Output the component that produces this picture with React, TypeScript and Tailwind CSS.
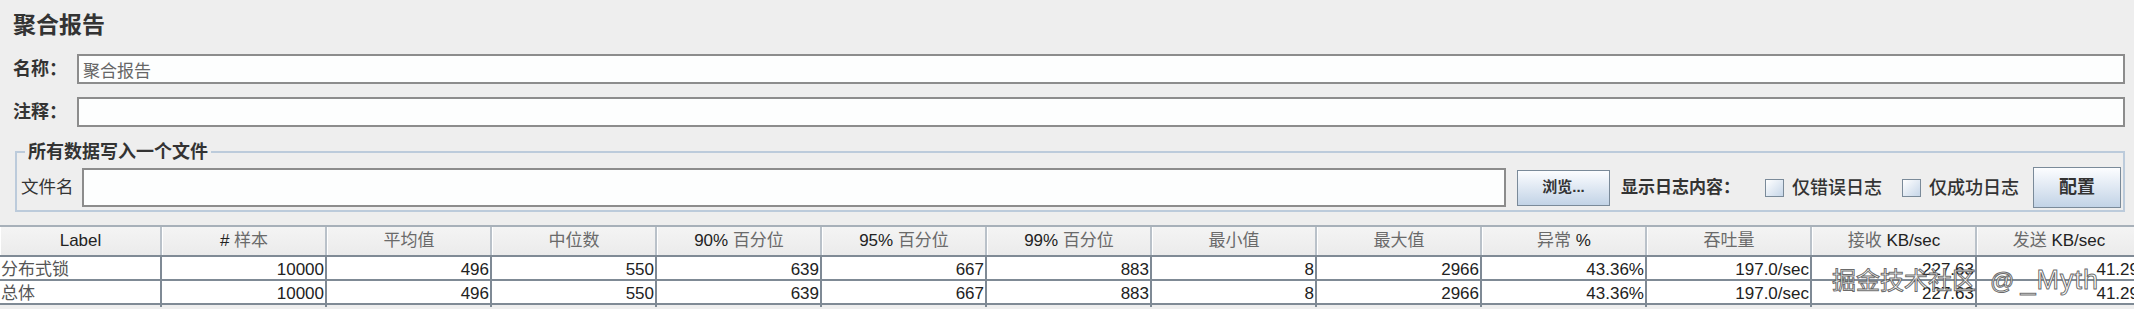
import React from "react";

const cjk = /([\u3000-\u9fff\uff00-\uffef]+)/;

const headers = [
    "Label",
    "# 样本",
    "平均值",
    "中位数",
    "90% 百分位",
    "95% 百分位",
    "99% 百分位",
    "最小值",
    "最大值",
    "异常 %",
    "吞吐量",
    "接收 KB/sec",
    "发送 KB/sec",
];

const values = ["10000", "496", "550", "639", "667", "883", "8", "2966", "43.36%", "197.0/sec", "227.63", "41.29"];

const rows = [
    ["分布式锁", ...values],
    ["总体", ...values],
];

// CJK runs render lighter in the header, latin parts stay dark
const Mixed = ({ text }: { text: string }) => (
    <span className="whitespace-pre">
        {text.split(cjk).map((part, i) =>
            cjk.test(part) ? (
                <span key={i} className="text-[#6a6a6a]">{part}</span>
            ) : (
                <span key={i}>{part}</span>
            )
        )}
    </span>
);

const Check = ({ label }: { label: string }) => (
    <div className="flex items-center gap-[8px]">
        <span className="w-[19px] h-[18px] border border-[#7a8a99] bg-linear-to-br from-[#ffffff] to-[#c6d6e8]" />
        <span className="text-[18px] leading-[20px] font-medium text-[#333]">{label}</span>
    </div>
);

const App = () => {
    return (
        <div className="relative w-[2134px] h-[309px] overflow-hidden bg-[#eeeeee] font-['Liberation_Sans','Noto_Sans_CJK_SC',sans-serif] text-[#222]">
            <div className="pl-[13px] pt-[13px] text-[23px] leading-[24px] font-bold text-[#333]">聚合报告</div>

            <div className="flex items-center mt-[17px] h-[30px] pr-[9px]">
                <label className="w-[77px] pl-[13px] text-[18px] font-bold text-[#333]">名称：</label>
                <input
                    type="text"
                    defaultValue="聚合报告"
                    className="flex-1 h-[30px] border-2 border-[#8c8c8c] bg-[#fdfefe] pl-[4px] text-[17px] text-[#666] outline-none"
                />
            </div>

            <div className="flex items-center mt-[13px] h-[30px] pr-[9px]">
                <label className="w-[77px] pl-[13px] text-[18px] font-bold text-[#333]">注释：</label>
                <input type="text" className="flex-1 h-[30px] border-2 border-[#8c8c8c] bg-[#fdfefe] outline-none" />
            </div>

            <fieldset className="mt-[16px] ml-[15px] w-[2110px] border-2 border-[#bccbdb] pl-[4px] pr-[2px] pt-[6px] pb-[2px]">
                <legend className="ml-[4px] px-[3px] text-[18px] leading-[18px] font-bold text-[#333]">所有数据写入一个文件</legend>
                <div className="flex items-center h-[41px]">
                    <span className="w-[61px] text-[17.5px] text-[#333]">文件名</span>
                    <input type="text" className="flex-1 h-[39px] border-2 border-[#8c8c8c] bg-[#fdfefe] outline-none" />
                    <button className="ml-[11px] w-[93px] h-[36px] border border-[#7a8a99] bg-linear-to-b from-[#fcfdff] to-[#c2d3e6] text-[15px] font-bold text-[#333]">
                        浏览...
                    </button>
                    <span className="ml-[11px] text-[17px] font-bold text-[#333]">显示日志内容：</span>
                    <div className="ml-[25px] flex items-center gap-[20px]">
                        <Check label="仅错误日志" />
                        <Check label="仅成功日志" />
                    </div>
                    <button className="ml-[14px] w-[88px] h-[41px] border border-[#7a8a99] bg-linear-to-b from-[#fcfdff] to-[#c2d3e6] text-[18px] font-bold text-[#333]">
                        配置
                    </button>
                </div>
            </fieldset>

            <div className="mt-[13px] w-[2142px]">
                <div className="grid grid-cols-[162px_repeat(12,165px)] h-[32px] border-t-2 border-b-2 border-t-[#a7b0b9] border-b-[#7f8a95] bg-linear-to-b from-[#f4f4f4] to-[#ebebeb]">
                    {headers.map((h) => (
                        <div
                            key={h}
                            className="flex items-center justify-center border-r-2 border-r-[#b9c1c9] border-l border-l-white text-[17px] text-[#222]"
                        >
                            <Mixed text={h} />
                        </div>
                    ))}
                </div>
                {rows.map((row) => (
                    <div key={row[0]} className="grid grid-cols-[162px_repeat(12,165px)] h-[24px] bg-white border-b-2 border-[#7f8a95]">
                        {row.map((cell, i) => (
                            <div
                                key={i}
                                className={
                                    i === 0
                                        ? "flex items-center pl-[1px] border-r-2 border-[#7f8a95] text-[17px] text-[#555]"
                                        : "flex items-center justify-end pr-[1px] border-r-2 border-[#7f8a95] text-[17px] text-[#222]"
                                }
                            >
                                {cell}
                            </div>
                        ))}
                    </div>
                ))}
            </div>

            {/* watermark over the last columns */}
            <div className="absolute left-[1832px] top-[264px] flex items-baseline whitespace-nowrap leading-[32px] text-[rgba(255,255,255,0.92)] [-webkit-text-stroke:1px_rgba(80,80,80,0.85)]">
                <span className="text-[24px]">掘金技术社区</span>
                <span className="ml-[14px] text-[24px]">@</span>
                <span className="ml-[6px] text-[27px] tracking-[1px]">_Myth</span>
            </div>
        </div>
    );
};

export default App;
